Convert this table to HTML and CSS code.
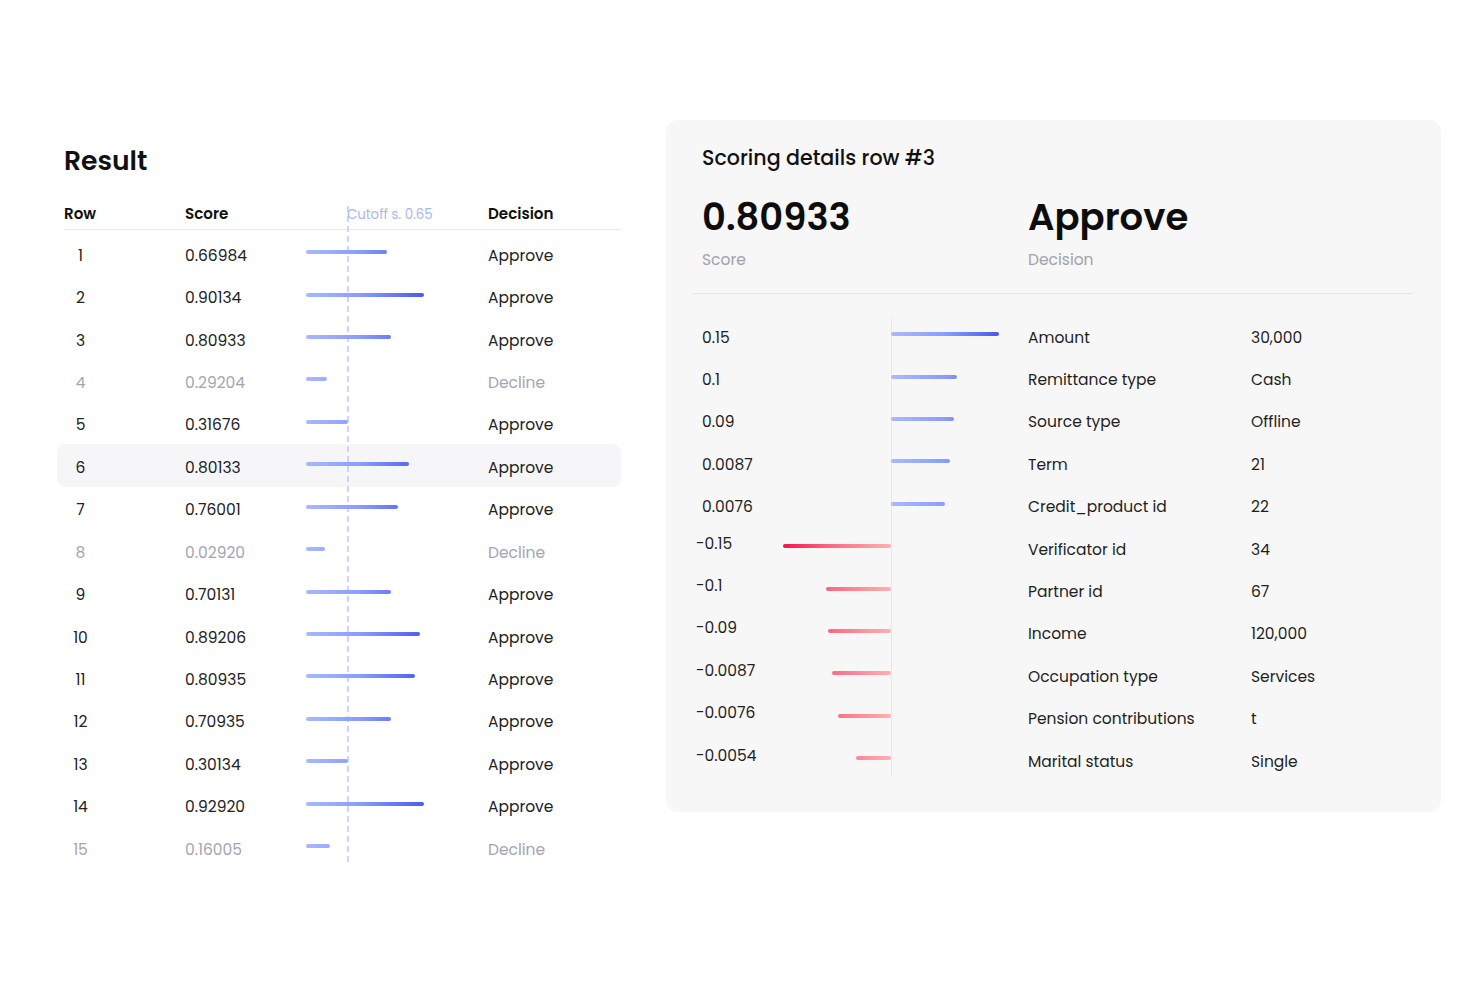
FILE: index.html
```html
<!DOCTYPE html>
<html lang="en">
<head>
<meta charset="utf-8">
<title>Scoring result</title>
<link rel="stylesheet" href="styles.css">
</head>
<body>
<div class="page">
  <section class="result">
    <h1 class="result-title">Result</h1>
    <div class="table">
      <div class="cutoff-line"></div>
      <div class="thead">
        <div class="c-row">Row</div>
        <div class="c-score">Score</div>
        <div class="c-bar"><span class="cutoff-label">Cutoff s. 0.65</span></div>
        <div class="c-dec">Decision</div>
      </div>
      <div class="rows">
        <div class="tr"><div class="c-row"><span class="num">1</span></div><div class="c-score">0.66984</div><div class="c-bar"><span class="bar" style="width:81px"></span></div><div class="c-dec">Approve</div></div>
        <div class="tr"><div class="c-row"><span class="num">2</span></div><div class="c-score">0.90134</div><div class="c-bar"><span class="bar" style="width:118px"></span></div><div class="c-dec">Approve</div></div>
        <div class="tr"><div class="c-row"><span class="num">3</span></div><div class="c-score">0.80933</div><div class="c-bar"><span class="bar" style="width:85px"></span></div><div class="c-dec">Approve</div></div>
        <div class="tr is-declined"><div class="c-row"><span class="num">4</span></div><div class="c-score">0.29204</div><div class="c-bar"><span class="bar" style="width:21px"></span></div><div class="c-dec">Decline</div></div>
        <div class="tr"><div class="c-row"><span class="num">5</span></div><div class="c-score">0.31676</div><div class="c-bar"><span class="bar" style="width:42px"></span></div><div class="c-dec">Approve</div></div>
        <div class="tr is-active"><div class="c-row"><span class="num">6</span></div><div class="c-score">0.80133</div><div class="c-bar"><span class="bar" style="width:103px"></span></div><div class="c-dec">Approve</div></div>
        <div class="tr"><div class="c-row"><span class="num">7</span></div><div class="c-score">0.76001</div><div class="c-bar"><span class="bar" style="width:92px"></span></div><div class="c-dec">Approve</div></div>
        <div class="tr is-declined"><div class="c-row"><span class="num">8</span></div><div class="c-score">0.02920</div><div class="c-bar"><span class="bar" style="width:19px"></span></div><div class="c-dec">Decline</div></div>
        <div class="tr"><div class="c-row"><span class="num">9</span></div><div class="c-score">0.70131</div><div class="c-bar"><span class="bar" style="width:85px"></span></div><div class="c-dec">Approve</div></div>
        <div class="tr"><div class="c-row"><span class="num">10</span></div><div class="c-score">0.89206</div><div class="c-bar"><span class="bar" style="width:114px"></span></div><div class="c-dec">Approve</div></div>
        <div class="tr"><div class="c-row"><span class="num">11</span></div><div class="c-score">0.80935</div><div class="c-bar"><span class="bar" style="width:109px"></span></div><div class="c-dec">Approve</div></div>
        <div class="tr"><div class="c-row"><span class="num">12</span></div><div class="c-score">0.70935</div><div class="c-bar"><span class="bar" style="width:85px"></span></div><div class="c-dec">Approve</div></div>
        <div class="tr"><div class="c-row"><span class="num">13</span></div><div class="c-score">0.30134</div><div class="c-bar"><span class="bar" style="width:42px"></span></div><div class="c-dec">Approve</div></div>
        <div class="tr"><div class="c-row"><span class="num">14</span></div><div class="c-score">0.92920</div><div class="c-bar"><span class="bar" style="width:118px"></span></div><div class="c-dec">Approve</div></div>
        <div class="tr is-declined"><div class="c-row"><span class="num">15</span></div><div class="c-score">0.16005</div><div class="c-bar"><span class="bar" style="width:24px"></span></div><div class="c-dec">Decline</div></div>
      </div>
    </div>
  </section>

  <section class="details">
    <h2 class="details-title">Scoring details row #3</h2>
    <div class="summary">
      <div class="stat">
        <div class="stat-value">0.80933</div>
        <div class="stat-label">Score</div>
      </div>
      <div class="stat">
        <div class="stat-value">Approve</div>
        <div class="stat-label">Decision</div>
      </div>
    </div>
    <div class="divider"></div>
    <div class="features">
      <div class="axis"></div>
      <div class="frow"><div class="fval">0.15</div><div class="fchart"><span class="fbar pos" style="width:108px"></span></div><div class="fname">Amount</div><div class="fdata">30,000</div></div>
      <div class="frow"><div class="fval">0.1</div><div class="fchart"><span class="fbar pos" style="width:66px"></span></div><div class="fname">Remittance type</div><div class="fdata">Cash</div></div>
      <div class="frow"><div class="fval">0.09</div><div class="fchart"><span class="fbar pos" style="width:63px"></span></div><div class="fname">Source type</div><div class="fdata">Offline</div></div>
      <div class="frow"><div class="fval">0.0087</div><div class="fchart"><span class="fbar pos" style="width:59px"></span></div><div class="fname">Term</div><div class="fdata">21</div></div>
      <div class="frow"><div class="fval">0.0076</div><div class="fchart"><span class="fbar pos" style="width:54px"></span></div><div class="fname">Credit_product id</div><div class="fdata">22</div></div>
      <div class="frow"><div class="fval neg">-0.15</div><div class="fchart"><span class="fbar neg" style="width:108px"></span></div><div class="fname">Verificator id</div><div class="fdata">34</div></div>
      <div class="frow"><div class="fval neg">-0.1</div><div class="fchart"><span class="fbar neg" style="width:65px"></span></div><div class="fname">Partner id</div><div class="fdata">67</div></div>
      <div class="frow"><div class="fval neg">-0.09</div><div class="fchart"><span class="fbar neg" style="width:63px"></span></div><div class="fname">Income</div><div class="fdata">120,000</div></div>
      <div class="frow"><div class="fval neg">-0.0087</div><div class="fchart"><span class="fbar neg" style="width:59px"></span></div><div class="fname">Occupation type</div><div class="fdata">Services</div></div>
      <div class="frow"><div class="fval neg">-0.0076</div><div class="fchart"><span class="fbar neg" style="width:53px"></span></div><div class="fname">Pension contributions</div><div class="fdata">t</div></div>
      <div class="frow"><div class="fval neg">-0.0054</div><div class="fchart"><span class="fbar neg" style="width:35px"></span></div><div class="fname">Marital status</div><div class="fdata">Single</div></div>
    </div>
  </section>
</div>
</body>
</html>
```

FILE: styles.css
```css
* { box-sizing: border-box; }

html, body {
  margin: 0;
  padding: 0;
  background: #ffffff;
}

body {
  font-family: "Poppins", "Inter", "Noto Sans", sans-serif;
  color: #1f1f1f;
  font-size: 15.5px;
}

.page {
  display: flex;
  align-items: flex-start;
  gap: 45px;
  padding: 120px 0 0 57px;
}

/* ---------- Result table ---------- */
.result {
  width: 564px;
  padding-top: 25px;
}

.result-title {
  margin: 0 0 20px 7px;
  font-size: 26.6px;
  line-height: 32px;
  font-weight: 600;
  color: #111;
}

.table {
  position: relative;
}

.cutoff-line {
  position: absolute;
  left: 290px;
  top: 9px;
  bottom: 3px;
  width: 1.5px;
  background: repeating-linear-gradient(to bottom, #cdd4f8 0 6px, transparent 6px 10px);
}

.thead,
.tr {
  display: grid;
  grid-template-columns: 121px 121px 182px 1fr;
  align-items: center;
}

.thead {
  margin-left: 7px;
  height: 33px;
  padding-top: 1px;
  border-bottom: 1px solid #e9e9ec;
  font-size: 15px;
  font-weight: 500;
  color: #111;
}

.thead .c-row,
.thead .c-score,
.thead .c-dec {
  font-weight: 600;
  font-size: 15.1px;
}

.cutoff-label {
  display: inline-block;
  padding-left: 41px;
  font-size: 13.3px;
  font-weight: 400;
  color: #a9b6f4;
}

.rows {
  margin-top: 2px;
}

.tr {
  height: 42.43px;
  padding: 4px 0 0 7px;
  border-radius: 8px;
  color: #222;
}

.tr.is-active {
  background: #f6f6f8;
}

.tr.is-declined {
  color: #a3a6b0;
}

.num {
  display: inline-block;
  width: 33px;
  text-align: center;
}

.c-bar {
  position: relative;
}

.bar {
  display: block;
  height: 4px;
  margin-top: -5px;
  border-radius: 2px;
  background-image: linear-gradient(90deg, #a8b8ff 0%, #8a9dfc 45%, #4a5cef 100%);
  background-size: 118px 100%;
  background-repeat: no-repeat;
}

/* ---------- Details panel ---------- */
.details {
  width: 775px;
  background: #f7f7f7;
  border-radius: 12px;
  padding: 24px 28px 30px 27px;
}

.details-title {
  margin: 0 0 23px 9px;
  font-size: 20.6px;
  line-height: 28px;
  font-weight: 500;
  color: #111;
}

.summary {
  display: grid;
  grid-template-columns: 326px 1fr;
  padding-left: 9px;
}

.stat-value {
  font-size: 37px;
  line-height: 44px;
  font-weight: 600;
  color: #0d0d0d;
}

.stat-label {
  margin-top: 10px;
  font-size: 15.5px;
  line-height: 22px;
  color: #a0a3ab;
}

.divider {
  margin-top: 22px;
  border-top: 1px solid #e4e4e6;
}

.features {
  position: relative;
  margin-top: 22px;
  padding-left: 9px;
}

.axis {
  position: absolute;
  left: 198px;
  top: 2px;
  bottom: 7px;
  width: 1px;
  background: #e7e7ea;
}

.frow {
  display: grid;
  grid-template-columns: 81px 216px 29px 223px 1fr;
  align-items: center;
  height: 42.4px;
  color: #1f1f1f;
}

.fval { grid-column: 1; }
.fval.neg {
  margin-left: -6px;
  padding-bottom: 12px;
}
.fchart { grid-column: 2; position: relative; height: 4px; margin-top: -6px; }
.fname { grid-column: 4; }
.fdata { grid-column: 5; }

.fbar {
  display: block;
  height: 4px;
  border-radius: 2px;
  background-repeat: no-repeat;
  background-size: 108px 100%;
}

.fbar.pos {
  margin-left: 108px;
  background-image: linear-gradient(90deg, #a9b9ff 0%, #8a9dfc 50%, #4659ee 100%);
  background-position: left center;
}

.fbar.neg {
  margin-left: auto;
  margin-right: 108px;
  background-image: linear-gradient(90deg, #f2154b 0%, #fb6b86 45%, #ffb0b0 100%);
  background-position: right center;
}
```
